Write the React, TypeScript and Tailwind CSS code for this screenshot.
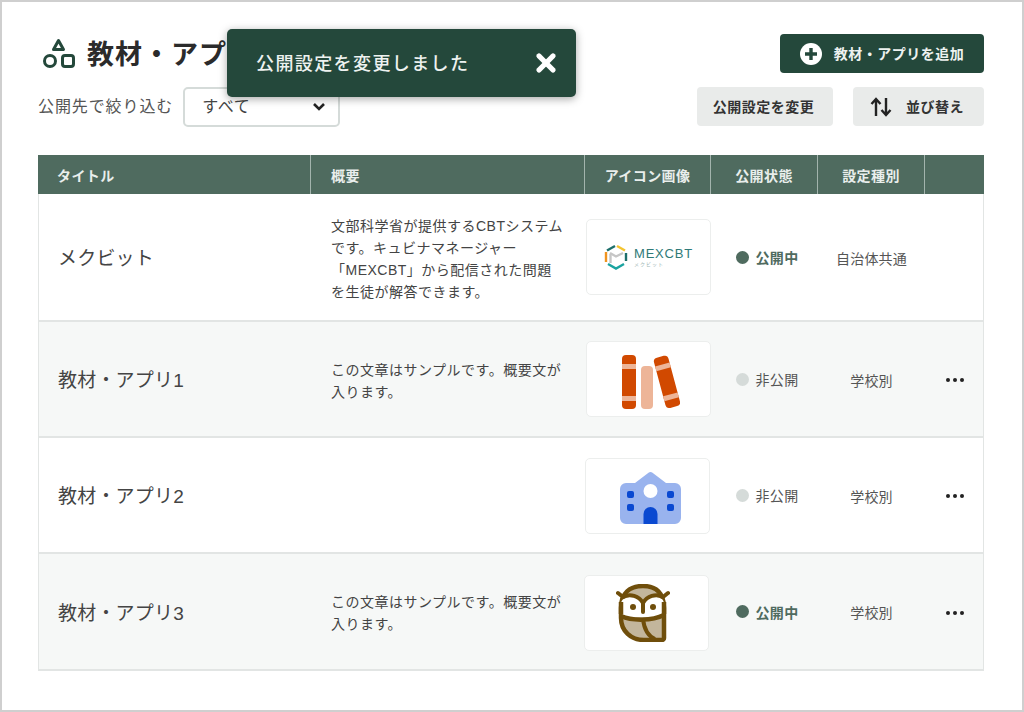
import { X } from 'lucide-react'

const headCols = 'grid grid-cols-[273px_274px_126px_107px_107px_59px]'
const rowCols = 'grid grid-cols-[272px_274px_126px_107px_107px_58px]'

function ShapesIcon() {
  return (
    <svg width="32" height="31" viewBox="0 0 32 31" fill="none" stroke="#24483b" strokeWidth="3">
      <path d="M15.500 2.500 L20.500 11.500 H10.500 Z" strokeLinejoin="round" />
      <circle cx="7" cy="23" r="5.500" />
      <rect x="19.500" y="17.500" width="11" height="11" rx="2.500" />
    </svg>
  )
}

function MexcbtLogo() {
  return (
    <div className="flex items-center gap-[6px]">
      <svg width="24" height="26" viewBox="0 0 24 26" fill="none" strokeWidth="2.4">
        <path d="M11 2 L3 6.500" stroke="#1d6f6b" />
        <path d="M13 2 L21 6.500" stroke="#f4c430" />
        <path d="M2 8 V18" stroke="#f0931e" />
        <path d="M6 9 L12 12.500 L19 9" stroke="#c6c6c6" />
        <path d="M6.500 10 V19" stroke="#c6c6c6" />
        <path d="M22 9 V17" stroke="#1d6f6b" />
        <path d="M4 20 L12 24.500 L20 20" stroke="#1ba3a0" />
      </svg>
      <div className="flex flex-col items-start">
        <span className="text-[13px] leading-[14px] tracking-[0.8px] text-[#2f7a78]">MEXCBT</span>
        <span className="text-[5px] leading-[6px] tracking-[1px] text-[#9fb8b6]">メクビット</span>
      </div>
    </div>
  )
}

function BooksIcon() {
  return (
    <svg className="ml-[4px] mt-[6px]" width="58" height="54" viewBox="0 0 58 54" fill="none">
      <rect x="0" y="0" width="14" height="54" rx="4" fill="#d14900" />
      <rect x="0" y="9" width="14" height="5" fill="#edb598" />
      <rect x="0" y="41" width="14" height="5" fill="#edb598" />
      <rect x="19" y="11" width="12" height="43" rx="4" fill="#edb598" />
      <g transform="rotate(-15 44.500 27)">
        <rect x="37.500" y="1" width="15" height="52" rx="4" fill="#d14900" />
        <rect x="37.500" y="9" width="15" height="5" fill="#edb598" />
        <rect x="37.500" y="40" width="15" height="5" fill="#edb598" />
      </g>
    </svg>
  )
}

function SchoolIcon() {
  return (
    <svg className="ml-[5px] mt-[4px]" width="61" height="52" viewBox="0 0 61 52" fill="none">
      <path d="M30.500 0 a3 3 0 0 1 2 .8 L46 11 H55 a6 6 0 0 1 6 6 V46 a6 6 0 0 1 -6 6 H6 a6 6 0 0 1 -6 -6 V17 a6 6 0 0 1 6 -6 H15 L28.500 .8 A3 3 0 0 1 30.500 0 Z" fill="#99b3ee" />
      <circle cx="30.500" cy="19" r="7" fill="#ffffff" />
      <rect x="7" y="19" width="7" height="7" rx="2" fill="#0a49d1" />
      <rect x="47" y="19" width="7" height="7" rx="2" fill="#0a49d1" />
      <rect x="7" y="32" width="7" height="7" rx="2" fill="#0a49d1" />
      <rect x="47" y="32" width="7" height="7" rx="2" fill="#0a49d1" />
      <path d="M23.500 52 V42 a7 7 0 0 1 14 0 V52 Z" fill="#0a49d1" />
    </svg>
  )
}

function OwlIcon() {
  return (
    <svg className="mr-[8px]" width="54" height="58" viewBox="0 0 54 58" fill="none" stroke="#6f4e0b">
      <path d="M5 24 C5 9 14 2 27 2 C40 2 48 9 48 24 V54 a2 2 0 0 1 -2 2 H28 C15 56 5 47 5 34 Z" fill="#c3b69c" strokeWidth="4.500" strokeLinejoin="round" />
      <path d="M7 13 L2 9 M47 13 L52 9" strokeWidth="4" strokeLinecap="round" />
      <path d="M5 20 C5 15 10 13 15 13 C20 13 24 15 27 19 C30 15 34 13 39 13 C44 13 48 15 48 20 V27 C48 31 44 33 39 33 H15 C10 33 5 31 5 27 Z" fill="#ffffff" stroke="none" />
      <path d="M5 18 V30 M48 18 V30" strokeWidth="4.500" />
      <path d="M5 32 C16 37 36 37 48 31" strokeWidth="4.500" />
      <path d="M7 13 C14 9 23 12 27 19 C31 12 40 9 47 13" strokeWidth="4" />
      <path d="M27 20 V28" strokeWidth="4" strokeLinecap="round" />
      <circle cx="17" cy="23" r="3" fill="#6f4e0b" stroke="none" />
      <circle cx="37" cy="23" r="3" fill="#6f4e0b" stroke="none" />
      <path d="M27 35 C28 44 32 52 39 55" strokeWidth="4" />
    </svg>
  )
}

function Status({ on }: { on: boolean }) {
  return (
    <div className="flex items-center justify-center gap-[6px] pl-[5px]">
      <span className={on ? 'ml-[1px] h-[13px] w-[13px] rounded-full bg-[#4f6b5f]' : 'ml-[1px] h-[13px] w-[13px] rounded-full bg-[#d5dbd9]'} />
      <span className={on ? 'pt-[3px] text-[14px] font-semibold tracking-[0.4px] text-[#4f6b5f]' : 'pt-[3px] text-[14px] tracking-[0.4px] text-[#555]'}>{on ? '公開中' : '非公開'}</span>
    </div>
  )
}

function Dots() {
  return (
    <div className="flex items-center justify-center gap-[3px] pl-[1px] pt-[2px]">
      <span className="h-1 w-1 rounded-full bg-[#222]" />
      <span className="h-1 w-1 rounded-full bg-[#222]" />
      <span className="h-1 w-1 rounded-full bg-[#222]" />
    </div>
  )
}

const rows = [
  {
    title: 'メクビット',
    desc: ['文部科学省が提供するCBTシステム', 'です。キュビナマネージャー', '「MEXCBT」から配信された問題', 'を生徒が解答できます。'],
    icon: <MexcbtLogo />,
    on: true,
    kind: '自治体共通',
    menu: false,
    h: 'h-[128px]',
    bg: 'bg-white',
    imgX: 'ml-[1px]',
  },
  {
    title: '教材・アプリ1',
    desc: ['この文章はサンプルです。概要文が', '入ります。'],
    icon: <BooksIcon />,
    on: false,
    kind: '学校別',
    menu: true,
    h: 'h-[116px]',
    bg: 'bg-[#f6f8f7]',
    imgX: 'ml-[1px]',
  },
  {
    title: '教材・アプリ2',
    desc: [],
    icon: <SchoolIcon />,
    on: false,
    kind: '学校別',
    menu: true,
    h: 'h-[116px]',
    bg: 'bg-white',
    imgX: 'ml-0 mt-[2px]',
  },
  {
    title: '教材・アプリ3',
    desc: ['この文章はサンプルです。概要文が', '入ります。'],
    icon: <OwlIcon />,
    on: true,
    kind: '学校別',
    menu: true,
    h: 'h-[117px]',
    bg: 'bg-[#f6f8f7]',
    imgX: '-ml-[1px] mt-[2px]',
  },
]

export default function App() {
  return (
    <div className="relative h-[712px] w-[1024px] overflow-hidden border-2 border-[#cfcfcf] bg-white font-['Liberation_Sans','Noto_Sans_CJK_JP',sans-serif] text-[#333]">
      <div className="pl-[36px] pr-[38px] pt-[32px]">
        <div className="flex items-start justify-between">
          <div className="flex flex-col">
            <div className="flex h-[39px] items-center gap-[12px] pl-[5px]">
              <ShapesIcon />
              <h1 className="pt-[3px] text-[27px] font-bold leading-none tracking-[1px] text-[#2b2b2b]">教材・アプリ</h1>
            </div>
            <div className="mt-[14px] flex items-center gap-[10px]">
              <span className="text-[16px] tracking-[0.9px] text-[#555]">公開先で絞り込む</span>
              <div className="flex h-[40px] w-[157px] items-center justify-between rounded-[5px] border-2 border-[#d5dbd9] pl-[17px] pr-[12px]">
                <span className="text-[16px] tracking-[0.6px] text-[#444]">すべて</span>
                <svg width="14" height="10" viewBox="0 0 14 10" fill="none" stroke="#222" strokeWidth="2.600"><path d="M2 2 L7 7 L12 2" /></svg>
              </div>
            </div>
          </div>
          <div className="flex flex-col items-end gap-[14px]">
            <button className="flex h-[39px] w-[204px] items-center justify-center gap-[12px] rounded-[4px] bg-[#24483b] text-[14px] font-semibold tracking-[0.5px] text-[#eef2f0]">
              <span className="flex h-[22px] w-[22px] items-center justify-center rounded-full bg-white">
                <svg width="14" height="14" viewBox="0 0 14 14" stroke="#24483b" strokeWidth="3.400"><path d="M7 1 V13 M1 7 H13" /></svg>
              </span>
              <span className="pt-[2px]">教材・アプリを追加</span>
            </button>
            <div className="flex gap-[20px]">
              <button className="flex h-[39px] w-[136px] items-center justify-center rounded-[4px] bg-[#e9ebea] pr-[3px] pt-[2px] text-[14px] font-semibold tracking-[0.5px] text-[#333]">公開設定を変更</button>
              <button className="flex h-[39px] w-[131px] items-center justify-center gap-[14px] rounded-[4px] bg-[#e9ebea] text-[14px] font-semibold tracking-[0.5px] text-[#333]">
                <svg width="22" height="20" viewBox="0 0 22 20" fill="none" stroke="#222" strokeWidth="2.400" className="-ml-[3px]">
                  <path d="M6 19 V2 M1.500 7 L6 2 L10.500 7" />
                  <path d="M16 1 V18 M11.500 13 L16 18 L20.500 13" />
                </svg>
                <span className="pt-[2px]">並び替え</span>
              </button>
            </div>
          </div>
        </div>

        <div className="mt-[28px] w-[946px]">
          <div className={`${headCols} h-[39px] bg-[#4f6b5f] text-[14px] font-semibold tracking-[0.4px] text-[#e9eeec]`}>
            <div className="flex items-center border-r border-[#a3b4ad] pl-[19px] pt-[3px]">タイトル</div>
            <div className="flex items-center border-r border-[#a3b4ad] pl-[20px] pt-[3px]">概要</div>
            <div className="flex items-center justify-center border-r border-[#a3b4ad] pt-[3px]">アイコン画像</div>
            <div className="flex items-center justify-center border-r border-[#a3b4ad] pt-[3px]">公開状態</div>
            <div className="flex items-center justify-center border-r border-[#a3b4ad] pt-[3px]">設定種別</div>
            <div />
          </div>
          <div className="border-x border-[#e2e5e4]">
            {rows.map((row) => (
              <div key={row.title} className={`${rowCols} ${row.h} ${row.bg} items-center border-b-2 border-[#e2e5e4]`}>
                <div className="pl-[19px] pt-[5px] text-[19px] tracking-[0.2px] text-[#444]">{row.title}</div>
                <div className="pl-[20px] pt-[3px] text-[14px] leading-[22px] tracking-[0.5px] text-[#444]">
                  {row.desc.map((line) => (
                    <div key={line} className="whitespace-nowrap">{line}</div>
                  ))}
                </div>
                <div className={`${row.imgX} flex h-[76px] w-[125px] items-center justify-center rounded-[5px] border border-[#eceeed] bg-white`}>
                  {row.icon}
                </div>
                <Status on={row.on} />
                <div className="pt-[4px] text-center text-[14px] tracking-[0.2px] text-[#555]">{row.kind}</div>
                {row.menu ? <Dots /> : <div />}
              </div>
            ))}
          </div>
        </div>
      </div>

      <div className="absolute left-[225px] top-[27px] flex h-[68px] w-[349px] items-center justify-between rounded-[5px] bg-[#24483b] pl-[29px] pr-[16px] shadow-[0_2px_8px_rgba(0,0,0,0.35)]">
        <span className="pt-[2px] text-[18px] font-medium tracking-[1.400px] text-[#eef2f0]">公開設定を変更しました</span>
        <X size={28} strokeWidth={4.5} className="text-white" />
      </div>
    </div>
  )
}
